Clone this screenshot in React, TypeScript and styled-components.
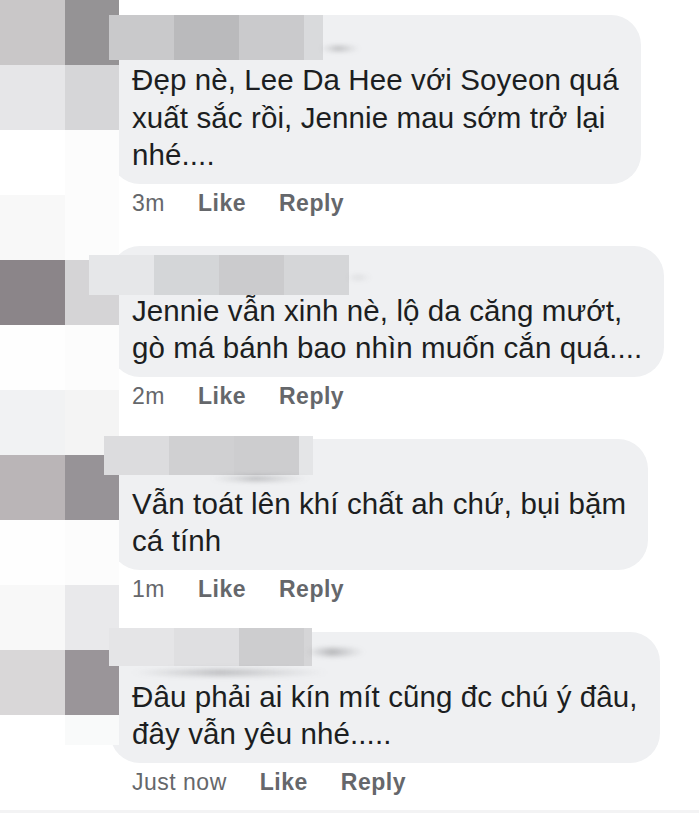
import React from "react";
import styled, { createGlobalStyle } from "styled-components";

const GlobalStyle = createGlobalStyle`
  html, body { margin: 0; padding: 0; background: #ffffff; }
  body { font-family: "Liberation Sans", Arial, sans-serif; }
`;

const Page = styled.div`
  position: relative;
  width: 699px;
  height: 813px;
  overflow: hidden;
  box-sizing: border-box;
  padding: 15px 0 0 110px;
  background: #ffffff;
  border-bottom: 3px solid #f3f3f4;
`;

const List = styled.div`
  display: flex;
  flex-direction: column;
  gap: 29.5px;
`;

const Comment = styled.div`
  position: relative;
  display: flex;
  flex-direction: column;
  align-items: flex-start;
`;

const Bubble = styled.div`
  background: #eff0f2;
  border-radius: 30px;
  padding: 46px 22px 10px 22px;
  color: #1c1e21;
  font-size: 29.5px;
  line-height: 37.5px;
  letter-spacing: 0.1px;
`;

const Line = styled.div`
  white-space: nowrap;
`;

const Meta = styled.div`
  display: flex;
  gap: 33px;
  margin-top: 6.5px;
  padding-left: 22px;
  font-size: 23px;
  line-height: 26px;
  letter-spacing: 0.5px;
  color: #65676b;
`;

const Action = styled.span<{ $bold?: boolean }>`
  font-weight: ${(p) => (p.$bold ? 700 : 400)};
`;

const MosaicColumn = styled.div`
  position: absolute;
  left: 0;
  top: 0;
  z-index: 1;
  display: grid;
  grid-template-columns: 65px 54px;
  grid-auto-rows: 65px;
`;

const Tile = styled.div<{ $c: string; $h?: number }>`
  background: ${(p) => p.$c};
  height: ${(p) => (p.$h ? `${p.$h}px` : "65px")};
`;

const NameCensor = styled.div<{ $x: number; $y: number; $h: number }>`
  position: absolute;
  left: ${(p) => p.$x}px;
  top: ${(p) => p.$y}px;
  height: ${(p) => p.$h}px;
  z-index: 2;
  display: flex;
`;

const CensorBlock = styled.div<{ $c: string; $w: number }>`
  width: ${(p) => p.$w}px;
  height: 100%;
  background: ${(p) => p.$c};
`;

const Smudge = styled.div<{ $x: number; $y: number; $w: number; $h: number; $o: number }>`
  position: absolute;
  left: ${(p) => p.$x}px;
  top: ${(p) => p.$y}px;
  width: ${(p) => p.$w}px;
  height: ${(p) => p.$h}px;
  border-radius: 50%;
  background: linear-gradient(
    90deg,
    rgba(80, 80, 84, 0) 0%,
    rgba(80, 80, 84, ${(p) => p.$o}) 45%,
    rgba(80, 80, 84, 0) 100%
  );
  filter: blur(2.5px);
  z-index: 2;
`;

const mosaicRows: [string, string][] = [
  ["#c9c7c8", "#959395"],
  ["#e6e6e8", "#d6d6d8"],
  ["#ffffff", "#fcfcfc"],
  ["#f8f8f8", "#fcfcfc"],
  ["#8b8589", "#d5d4d6"],
  ["#fefefe", "#fcfcfc"],
  ["#f1f2f3", "#f4f4f4"],
  ["#bab5b7", "#979397"],
  ["#fefefe", "#fcfcfc"],
  ["#f8f8f8", "#e9e9eb"],
  ["#d9d7d8", "#9a9599"],
];

type CensorSpec = { x: number; y: number; h: number; blocks: [string, number][] };
type SmudgeSpec = { x: number; y: number; w: number; h: number; o: number };

type CommentData = {
  lines: string[];
  time: string;
  censor: CensorSpec;
  smudges: SmudgeSpec[];
};

const comments: CommentData[] = [
  {
    lines: ["Đẹp nè, Lee Da Hee với Soyeon quá", "xuất sắc rồi, Jennie mau sớm trở lại", "nhé...."],
    time: "3m",
    censor: {
      x: -1,
      y: 0,
      h: 45,
      blocks: [
        ["#c9c9cb", 65],
        ["#bababc", 65],
        ["#cacacc", 65],
        ["#d9dadc", 19],
      ],
    },
    smudges: [{ x: 210, y: 31, w: 40, h: 5, o: 0.35 }],
  },
  {
    lines: ["Jennie vẫn xinh nè, lộ da căng mướt,", "gò má bánh bao nhìn muốn cắn quá...."],
    time: "2m",
    censor: {
      x: -21,
      y: 9,
      h: 40,
      blocks: [
        ["#e6e7e9", 65],
        ["#d4d6d8", 65],
        ["#cbcbcd", 65],
        ["#d5d6d8", 65],
      ],
    },
    smudges: [{ x: 236, y: 29, w: 26, h: 5, o: 0.12 }],
  },
  {
    lines: ["Vẫn toát lên khí chất ah chứ, bụi bặm", "cá tính"],
    time: "1m",
    censor: {
      x: -6,
      y: -3,
      h: 39,
      blocks: [
        ["#dcdcde", 65],
        ["#d0d0d2", 65],
        ["#cdcdcf", 65],
        ["#e4e5e7", 14],
      ],
    },
    smudges: [{ x: 100, y: 37, w: 100, h: 5, o: 0.35 }],
  },
  {
    lines: ["Đâu phải ai kín mít cũng đc chú ý đâu,", "đây vẫn yêu nhé....."],
    time: "Just now",
    censor: {
      x: -1,
      y: -4,
      h: 38,
      blocks: [
        ["#e5e5e7", 65],
        ["#dfdfe1", 65],
        ["#cdcdcf", 65],
        ["#d5d5d7", 8],
      ],
    },
    smudges: [
      { x: 20, y: 37, w: 200, h: 7, o: 0.3 },
      { x: 195, y: 16, w: 60, h: 8, o: 0.35 },
    ],
  },
];

export default function App() {
  return (
    <>
      <GlobalStyle />
      <Page>
        <MosaicColumn>
          {mosaicRows.map(([a, b], i) => (
            <React.Fragment key={i}>
              <Tile $c={a} />
              <Tile $c={b} />
            </React.Fragment>
          ))}
          <Tile $c="#ffffff" $h={30} />
          <Tile $c="#f9fafa" $h={30} />
        </MosaicColumn>
        <List>
          {comments.map((c, i) => (
            <Comment key={i}>
              <NameCensor $x={c.censor.x} $y={c.censor.y} $h={c.censor.h}>
                {c.censor.blocks.map(([col, w], j) => (
                  <CensorBlock key={j} $c={col} $w={w} />
                ))}
              </NameCensor>
              {c.smudges.map((s, j) => (
                <Smudge key={j} $x={s.x} $y={s.y} $w={s.w} $h={s.h} $o={s.o} />
              ))}
              <Bubble>
                {c.lines.map((l, j) => (
                  <Line key={j}>{l}</Line>
                ))}
              </Bubble>
              <Meta>
                <Action>{c.time}</Action>
                <Action $bold>Like</Action>
                <Action $bold>Reply</Action>
              </Meta>
            </Comment>
          ))}
        </List>
      </Page>
    </>
  );
}
